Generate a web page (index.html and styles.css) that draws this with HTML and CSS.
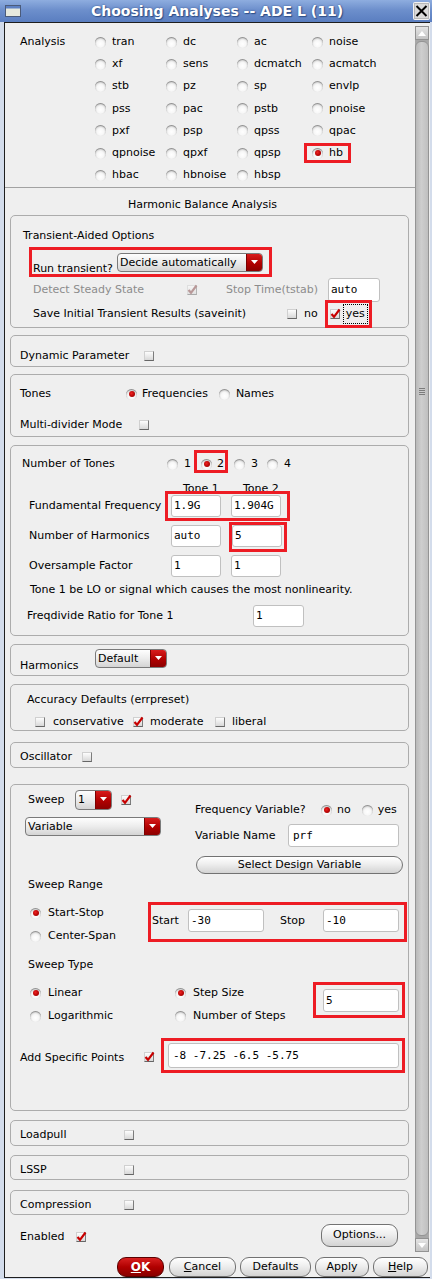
FILE: index.html
```html
<!DOCTYPE html>
<html>
<head>
<meta charset="utf-8">
<link rel="stylesheet" href="styles.css">
</head>
<body>
<div class="titlebar">
  <svg class="winicon" width="16" height="12" viewBox="0 0 16 12"><rect x="0.5" y="0.5" width="15" height="11" fill="#e6e9de" stroke="#4b5b7a"/><rect x="1" y="1" width="14" height="2.5" fill="#5d80c2"/></svg>
  <div class="title">Choosing Analyses -- ADE L (11)</div>
  <svg class="close" width="17" height="18" viewBox="0 0 17 18"><rect x="0.5" y="0.5" width="16" height="17" rx="1" fill="#dadada" stroke="#f2f2f2"/><rect x="1.5" y="1.5" width="14" height="15" fill="none" stroke="#b8b8b8"/><path d="M3.5 4 L13.5 14 M13.5 4 L3.5 14" stroke="#000" stroke-width="2"/></svg>
</div>
<div class="client">
  <div class="main">
    <div class="pane">
      <div class="analysis">
        <div>Analysis</div>
        <div class="ri"><span class="rb"></span>tran</div>
        <div class="ri"><span class="rb"></span>dc</div>
        <div class="ri"><span class="rb"></span>ac</div>
        <div class="ri"><span class="rb"></span>noise</div>
        <div></div>
        <div class="ri"><span class="rb"></span>xf</div>
        <div class="ri"><span class="rb"></span>sens</div>
        <div class="ri"><span class="rb"></span>dcmatch</div>
        <div class="ri"><span class="rb"></span>acmatch</div>
        <div></div>
        <div class="ri"><span class="rb"></span>stb</div>
        <div class="ri"><span class="rb"></span>pz</div>
        <div class="ri"><span class="rb"></span>sp</div>
        <div class="ri"><span class="rb"></span>envlp</div>
        <div></div>
        <div class="ri"><span class="rb"></span>pss</div>
        <div class="ri"><span class="rb"></span>pac</div>
        <div class="ri"><span class="rb"></span>pstb</div>
        <div class="ri"><span class="rb"></span>pnoise</div>
        <div></div>
        <div class="ri"><span class="rb"></span>pxf</div>
        <div class="ri"><span class="rb"></span>psp</div>
        <div class="ri"><span class="rb"></span>qpss</div>
        <div class="ri"><span class="rb"></span>qpac</div>
        <div></div>
        <div class="ri"><span class="rb"></span>qpnoise</div>
        <div class="ri"><span class="rb"></span>qpxf</div>
        <div class="ri"><span class="rb"></span>qpsp</div>
        <div class="ri"><span class="hl hb-hl"><span class="rb on"></span>hb</span></div>
        <div></div>
        <div class="ri"><span class="rb"></span>hbac</div>
        <div class="ri"><span class="rb"></span>hbnoise</div>
        <div class="ri"><span class="rb"></span>hbsp</div>
        <div></div>
      </div>
      <div class="sep"></div>
      <div class="heading">Harmonic Balance Analysis</div>

      <div class="group g-trans">
        <div class="t-title">Transient-Aided Options</div>
        <div class="t-run">
          <div class="hl run-hl">
            <span class="run-lbl">Run transient?</span>
            <span class="dd dd-run"><span class="dd-t">Decide automatically</span><span class="dd-a"><svg width="7" height="4" viewBox="0 0 7 4"><path d="M0 0 H7 L3.5 4 Z" fill="#fff"/></svg></span></span>
          </div>
        </div>
        <div class="row t-detect">
          <span class="dis w-detect">Detect Steady State</span>
          <span class="cb cb-dis"><svg viewBox="0 0 8 8"><path d="M0.5 4 L3 6.8 L8.5 -0.5"/></svg></span>
          <span class="dis stop-lbl">Stop Time(tstab)</span>
          <span class="in in-auto">auto</span>
        </div>
        <div class="row t-save">
          <span class="w-save">Save Initial Transient Results (saveinit)</span>
          <span class="cb"></span>
          <span class="no-lbl">no</span>
          <span class="hl yes-hl"><span class="cb on"><svg viewBox="0 0 8 8"><path d="M0.5 4 L3 6.8 L8.5 -0.5"/></svg></span><span class="focus">yes</span></span>
        </div>
      </div>

      <div class="group g-dyn">
        <div class="row"><span class="w-dyn">Dynamic Parameter</span><span class="cb"></span></div>
      </div>

      <div class="group g-tones">
        <div class="row">
          <span class="w-tones">Tones</span>
          <span class="rb on"></span><span class="ml5">Frequencies</span>
          <span class="rb ml11"></span><span class="ml6">Names</span>
        </div>
        <div class="row md-row"><span class="w-md">Multi-divider Mode</span><span class="cb"></span></div>
      </div>

      <div class="group g-nt">
        <div class="row nt-row">
          <span class="w-nt">Number of Tones</span>
          <span class="rb"></span><span class="ml6">1</span>
          <span class="hl two-hl"><span class="rb on"></span><span class="ml5">2</span></span>
          <span class="rb ml9"></span><span class="ml6">3</span>
          <span class="rb ml9"></span><span class="ml6">4</span>
        </div>
        <div class="tone-hdr"><span class="th1">Tone 1</span><span>Tone 2</span></div>
        <div class="row ff-row">
          <span class="w-ff">Fundamental Frequency</span>
          <span class="hl ff-hl"><span class="in in50">1.9G</span><span class="in in50">1.904G</span></span>
        </div>
        <div class="row nh-row">
          <span class="w-nh">Number of Harmonics</span>
          <span class="in in50">auto</span>
          <span class="hl five-hl"><span class="in in50">5</span></span>
        </div>
        <div class="row os-row">
          <span class="w-nh">Oversample Factor</span>
          <span class="in in50">1</span>
          <span class="in in50 ml10">1</span>
        </div>
        <div class="note">Tone 1 be LO or signal which causes the most nonlinearity.</div>
        <div class="row fd-row">
          <span class="w-fd">Freqdivide Ratio for Tone 1</span>
          <span class="in in51">1</span>
        </div>
      </div>

      <div class="group g-harm">
        <div class="harm-row">
          <span class="w-harm">Harmonics</span>
          <span class="dd dd-def"><span class="dd-t">Default</span><span class="dd-a"><svg width="7" height="4" viewBox="0 0 7 4"><path d="M0 0 H7 L3.5 4 Z" fill="#fff"/></svg></span></span>
        </div>
      </div>

      <div class="group g-acc">
        <div class="acc-title">Accuracy Defaults (errpreset)</div>
        <div class="row acc-row">
          <span class="cb"></span><span class="ml8 w-cons">conservative</span>
          <span class="cb on"><svg viewBox="0 0 8 8"><path d="M0.5 4 L3 6.8 L8.5 -0.5"/></svg></span><span class="ml7 w-mod">moderate</span>
          <span class="cb"></span><span class="ml7">liberal</span>
        </div>
      </div>

      <div class="group g-osc">
        <div class="row"><span class="w-osc">Oscillator</span><span class="cb"></span></div>
      </div>

      <div class="group g-sweep">
        <div class="sw-top">
          <div class="sw-left">
            <div class="row sw-sweep">
              <span class="w-sweep">Sweep</span>
              <span class="dd dd-1"><span class="dd-t">1</span><span class="dd-a"><svg width="7" height="4" viewBox="0 0 7 4"><path d="M0 0 H7 L3.5 4 Z" fill="#fff"/></svg></span></span>
              <span class="cb on ml9"><svg viewBox="0 0 8 8"><path d="M0.5 4 L3 6.8 L8.5 -0.5"/></svg></span>
            </div>
            <span class="dd dd-var"><span class="dd-t">Variable</span><span class="dd-a"><svg width="7" height="4" viewBox="0 0 7 4"><path d="M0 0 H7 L3.5 4 Z" fill="#fff"/></svg></span></span>
          </div>
          <div class="sw-right">
            <div class="row fv-row">
              <span class="w-fv">Frequency Variable?</span>
              <span class="rb on"></span><span class="ml5">no</span>
              <span class="rb ml11"></span><span class="ml5">yes</span>
            </div>
            <div class="row vn-row"><span class="w-vn">Variable Name</span><span class="in in-prf">prf</span></div>
            <div class="btn sdv">Select Design Variable</div>
          </div>
        </div>
        <div class="sub-lbl sr-lbl">Sweep Range</div>
        <div class="sw-range">
          <div class="sr-left">
            <div class="row r16"><span class="rb on"></span><span class="ml7">Start-Stop</span></div>
            <div class="row r16 mt7"><span class="rb"></span><span class="ml7">Center-Span</span></div>
          </div>
          <div class="hl ss-hl">
            <span class="ss-start">Start</span>
            <span class="in in76">-30</span>
            <span class="ss-stop">Stop</span>
            <span class="in in76">-10</span>
          </div>
        </div>
        <div class="sub-lbl st-lbl">Sweep Type</div>
        <div class="sw-type">
          <div class="st-a">
            <div class="row r16"><span class="rb on"></span><span class="ml7">Linear</span></div>
            <div class="row r16 mt7"><span class="rb"></span><span class="ml7">Logarithmic</span></div>
          </div>
          <div class="st-b">
            <div class="row r16"><span class="rb on"></span><span class="ml7">Step Size</span></div>
            <div class="row r16 mt7"><span class="rb"></span><span class="ml7">Number of Steps</span></div>
          </div>
          <div class="hl step-hl"><span class="in in76">5</span></div>
        </div>
        <div class="row asp-row">
          <span class="w-asp">Add Specific Points</span>
          <span class="cb on asp-cb"><svg viewBox="0 0 8 8"><path d="M0.5 4 L3 6.8 L8.5 -0.5"/></svg></span>
          <span class="hl asp-hl"><span class="in in-asp">-8 -7.25 -6.5 -5.75</span></span>
        </div>
      </div>

      <div class="group g-small g-lp">
        <div class="row"><span class="w-small">Loadpull</span><span class="cb"></span></div>
      </div>
      <div class="group g-small g-lssp">
        <div class="row"><span class="w-small">LSSP</span><span class="cb"></span></div>
      </div>
      <div class="group g-small g-comp">
        <div class="row"><span class="w-small">Compression</span><span class="cb"></span></div>
      </div>

      <div class="row en-row">
        <span class="w-en">Enabled</span>
        <span class="cb on en-cb"><svg viewBox="0 0 8 8"><path d="M0.5 4 L3 6.8 L8.5 -0.5"/></svg></span>
        <span class="btn opt-btn">Options...</span>
      </div>
    </div>
    <div class="scrollbar">
      <div class="sb-btn"><svg width="8" height="5" viewBox="0 0 8 5"><path d="M0 5 H8 L4 0 Z" fill="#fff"/></svg></div>
      <div class="sb-thumb"><svg width="6" height="9" viewBox="0 0 6 9"><path d="M0 1.5 H6 M0 3.5 H6 M0 5.5 H6 M0 7.5 H6" stroke="#7c7c7c" stroke-width="1"/></svg></div>
      <div class="sb-btn"><svg width="8" height="5" viewBox="0 0 8 5"><path d="M0 0 H8 L4 5 Z" fill="#fff"/></svg></div>
    </div>
  </div>
  <div class="buttons">
    <span class="btn ok-btn"><u>O</u>K</span>
    <span class="btn b-cancel"><u>C</u>ancel</span>
    <span class="btn b-def">Defaults</span>
    <span class="btn b-apply">Apply</span>
    <span class="btn b-help"><u>H</u>elp</span>
  </div>
</div>
</body>
</html>
```

FILE: styles.css
```css
* { box-sizing: border-box; }
html, body { margin: 0; padding: 0; }
body {
  width: 432px; height: 1279px; overflow: hidden;
  background: #d3dceb;
  font-family: "DejaVu Sans", sans-serif; font-size: 11px; line-height: 14px; color: #000;
}
.titlebar { height: 22px; display: flex; align-items: center; background: linear-gradient(#8eaddf, #6d8fcc 45%, #5a7ec0); }
.winicon { margin-left: 5px; display: block; }
.title { flex: 1; text-align: center; color: #fff; font-weight: bold; font-size: 14px; line-height: 22px; text-shadow: 0 0 2px #34548c, 1px 1px 1px #2e4d86; }
.close { margin-right: 2px; display: block; }

.client {
  margin-left: 4px; width: 426px; height: 1256px;
  border-left: 1px solid #1e1e1e; border-top: 1px solid #1e1e1e; border-bottom: 1px solid #1e1e1e;
  background: #efefef; display: flex; flex-direction: column;
}
.main { display: flex; height: 1231px; }
.pane { width: 410px; flex: none; }

/* scrollbar */
.scrollbar { width: 14px; margin-top: 3px; height: 1226px; background: #a8a8a8; display: flex; flex-direction: column; }
.sb-btn { height: 14px; flex: none; background: linear-gradient(#e4e4e4, #c4c4c4); border: 1px solid #929292; display: flex; align-items: center; justify-content: center; }
.sb-thumb { flex: 1; margin: 1px 0 2px; border: 1px solid #949494; border-radius: 6px; background: linear-gradient(90deg, #b9b9b9, #cecece 45%, #bfbfbf); display: flex; flex-direction: column; align-items: center; padding-top: 345px; }

/* widgets */
.row { display: flex; align-items: center; }
.rb {
  width: 11px; height: 11px; flex: none; border-radius: 50%;
  background: radial-gradient(circle at 50% 62%, #ffffff 0, #f7f7f7 38%, #d6d6d6 72%, #9c9c9c 100%);
  box-shadow: inset 0 1px 1px rgba(0,0,0,0.35);
  display: inline-flex; align-items: center; justify-content: center;
}
.rb.on::after { content: ""; width: 6px; height: 6px; border-radius: 50%; background: radial-gradient(circle at 40% 40%, #f02020, #a80000 70%, #800000); }
.cb {
  width: 10px; height: 10px; flex: none; display: block;
  background: linear-gradient(#fdfdfd, #d8d8d8);
  border: 1px solid; border-color: #d0d0d0 #7c7c7c #666 #d0d0d0;
}
.cb svg { display: block; width: 8px; height: 8px; overflow: visible; }
.cb svg path { fill: none; stroke: #c80000; stroke-width: 2.2; stroke-linejoin: miter; }
.cb-dis { background: linear-gradient(#f6f6f6, #e2e2e2); border-color: #dedede #b4b4b4 #aaa #dedede; }
.cb-dis svg path { stroke: #b89898; }
.dis { color: #8c8c8c; }

.in {
  display: flex; align-items: center; flex: none;
  background: #fff; border: 1px solid #c0c0c0; border-radius: 3px;
  font-family: "DejaVu Sans Mono", monospace; font-size: 11px; padding-left: 2px;
}
.in50 { width: 50px; height: 22px; }
.in51 { width: 51px; height: 22px; }
.in76 { width: 76px; height: 23px; }

.dd {
  display: flex; flex: none; height: 19px;
  border: 1px solid #7a7a7a; border-radius: 4px; overflow: hidden;
  background: linear-gradient(#fefefe, #ececec 50%, #d4d4d4);
}
.dd-t { flex: 1; padding-left: 2px; line-height: 17px; white-space: nowrap; }
.dd-a { width: 16px; flex: none; background: linear-gradient(#d81c1c, #b00000 55%, #8c0000); border-left: 1px solid #7a0000; display: flex; align-items: center; justify-content: center; padding-bottom: 2px; }

.btn {
  display: flex; align-items: center; justify-content: center; flex: none;
  border: 1px solid #727272; border-radius: 9px;
  background: linear-gradient(#ffffff, #eeeeee 45%, #d3d3d3);
  white-space: nowrap;
}

.hl { outline: 3px solid #ed1c24; outline-offset: 0; }

.ml5 { margin-left: 5px; }
.ml6 { margin-left: 6px; }
.ml7 { margin-left: 7px; }
.ml8 { margin-left: 8px; }
.ml9 { margin-left: 9px; }
.ml10 { margin-left: 10px; }
.ml11 { margin-left: 11px; }
.mt7 { margin-top: 7px; }

/* analysis */
.analysis {
  height: 164px; padding: 8px 0 0 15px;
  display: grid; grid-template-columns: 75px 71px 71px 75px 1fr; grid-auto-rows: 22.2px; align-items: center;
}
.ri { display: flex; align-items: center; white-space: nowrap; }
.ri .rb { margin-right: 6px; }
.hb-hl { display: flex; align-items: center; margin-left: -5px; padding: 0 5px; height: 14px; }
.sep { height: 1px; background: #a2a2a2; }
.heading { height: 27px; padding: 10px 15px 0 0; text-align: center; }

/* groups */
.group { margin-left: 5px; width: 399px; border: 1px solid #acacac; border-radius: 5px; }

.g-trans { height: 113px; }
.t-title { margin: 13px 0 0 12px; }
.t-run { margin-top: 7px; display: flex; }
.run-hl { margin-left: 21px; height: 24px; display: flex; align-items: flex-end; padding: 0 6px 0 1px; }
.run-lbl { width: 84px; margin-bottom: -2px; }
.dd-run { width: 146px; margin-bottom: 2px; }
.t-detect { margin-top: 4px; height: 24px; padding-left: 22px; }
.w-detect { width: 154px; }
.stop-lbl { margin-left: 29px; width: 102px; }
.in-auto { width: 52px; height: 24px; }
.t-save { margin-top: 1px; height: 22px; padding-left: 22px; }
.w-save { width: 254px; }
.no-lbl { margin-left: 7px; }
.yes-hl { margin-left: 10px; height: 22px; display: flex; align-items: center; padding: 0 1px 0 2px; }
.focus { margin-left: 3px; border: 1px dotted #000; padding: 0 2px; line-height: 18px; }

.g-dyn { margin-top: 7px; height: 32px; padding: 13px 0 0 9px; }
.w-dyn { width: 124px; }

.g-tones { margin-top: 7px; height: 63px; padding: 12px 0 0 9px; }
.w-tones { width: 106px; }
.md-row { margin-top: 17px; }
.w-md { width: 119px; }

.g-nt { margin-top: 8px; height: 191px; }
.nt-row { margin-top: 7px; height: 22px; padding-left: 11px; }
.w-nt { width: 145px; }
.two-hl { margin-left: 6px; height: 17px; align-self: flex-start; display: flex; align-items: center; padding: 5px 1px 0 4px; }
.tone-hdr { margin-top: 7px; height: 13px; line-height: 13px; display: flex; }
.th1 { margin-left: 172px; width: 60px; }
.ff-row { height: 22px; padding-left: 18px; }
.w-ff { width: 139px; }
.ff-hl { height: 24px; display: flex; align-items: center; gap: 10px; padding: 0 6px 0 3px; }
.nh-row { margin-top: 8px; height: 22px; padding-left: 18px; }
.w-nh { width: 142px; }
.five-hl { margin-left: 11px; height: 24px; padding-right: 2px; align-self: flex-start; }
.os-row { margin-top: 8px; height: 22px; padding-left: 18px; }
.note { margin-top: 6px; padding-left: 19px; white-space: nowrap; }
.fd-row { margin-top: 8px; height: 22px; padding-left: 16px; }
.w-fd { width: 226px; }

.g-harm { margin-top: 8px; height: 32px; }
.harm-row { margin-top: 4px; height: 22px; padding-left: 9px; display: flex; align-items: flex-end; }
.w-harm { width: 75px; margin-bottom: -2px; }
.dd-def { width: 72px; margin-bottom: 3px; }

.g-acc { margin-top: 8px; height: 47px; }
.acc-title { margin-top: 8px; padding-left: 16px; }
.acc-row { margin-top: 8px; padding-left: 24px; }
.w-cons { width: 80px; }
.w-mod { width: 65px; }

.g-osc { margin-top: 11px; height: 26px; padding: 7px 0 0 9px; }
.w-osc { width: 62px; }

.g-sweep { margin-top: 16px; height: 327px; }
.sw-top { display: flex; }
.sw-left { width: 184px; padding-left: 14px; }
.sw-sweep { margin-top: 5px; height: 20px; padding-left: 3px; }
.w-sweep { width: 47px; }
.dd-1 { width: 37px; height: 20px; }
.dd-1 .dd-t { line-height: 18px; }
.dd-var { margin-top: 7px; width: 136px; }
.sw-right { flex: 1; }
.fv-row { margin-top: 18px; }
.w-fv { width: 126px; }
.vn-row { margin-top: 7px; height: 23px; }
.w-vn { width: 93px; }
.in-prf { width: 111px; height: 23px; padding-left: 4px; }
.sdv { margin: 9px 0 0 1px; width: 207px; height: 18px; }
.sub-lbl { padding-left: 17px; }
.sr-lbl { margin-top: 4px; }
.sw-range { margin-top: 13px; display: flex; }
.sr-left { width: 140px; padding-left: 19px; }
.r16 { height: 16px; }
.ss-hl { width: 253px; height: 34px; display: flex; align-items: flex-start; padding: 4px 5px 0 1px; }
.ss-start { width: 36px; line-height: 23px; }
.ss-stop { margin-left: 16px; width: 43px; line-height: 23px; }
.st-lbl { margin-top: 14px; }
.sw-type { margin-top: 13px; display: flex; }
.st-a { width: 164px; padding-left: 19px; }
.st-b { width: 141px; }
.step-hl { width: 86px; height: 30px; padding: 4px 3px 0 7px; }
.asp-row { margin-top: 17px; height: 29px; padding-left: 9px; }
.w-asp { width: 124px; margin-top: 4px; }
.asp-cb { margin-top: 3px; }
.asp-hl { margin-left: 10px; width: 238px; height: 29px; padding: 2px 3px 2px 4px; }
.in-asp { width: 231px; height: 25px; padding-left: 4px; }

.g-small { height: 25px; padding: 7px 0 0 9px; }
.g-lp { margin-top: 9px; height: 26px; }
.g-lssp { margin-top: 9px; }
.g-comp { margin-top: 10px; }
.w-small { width: 104px; }

.en-row { margin-top: 8px; height: 24px; padding-left: 15px; }
.w-en { width: 56px; margin-top: 4px; }
.en-cb { margin-top: 3px; }
.opt-btn { margin-left: auto; margin-right: 17px; width: 77px; height: 23px; }

/* bottom buttons */
.buttons { height: 23px; padding: 3px 2px 0 0; display: flex; justify-content: flex-end; gap: 4px; }
.buttons .btn { height: 20px; }
.ok-btn { width: 47px; margin-right: 1px; color: #fff; font-weight: bold; font-size: 12px; background: linear-gradient(#d82020, #b00000 50%, #880000); border-color: #5a0000; }
.b-cancel { width: 67px; }
.b-def { width: 71px; }
.b-apply { width: 54px; }
.b-help { width: 55px; }
```
